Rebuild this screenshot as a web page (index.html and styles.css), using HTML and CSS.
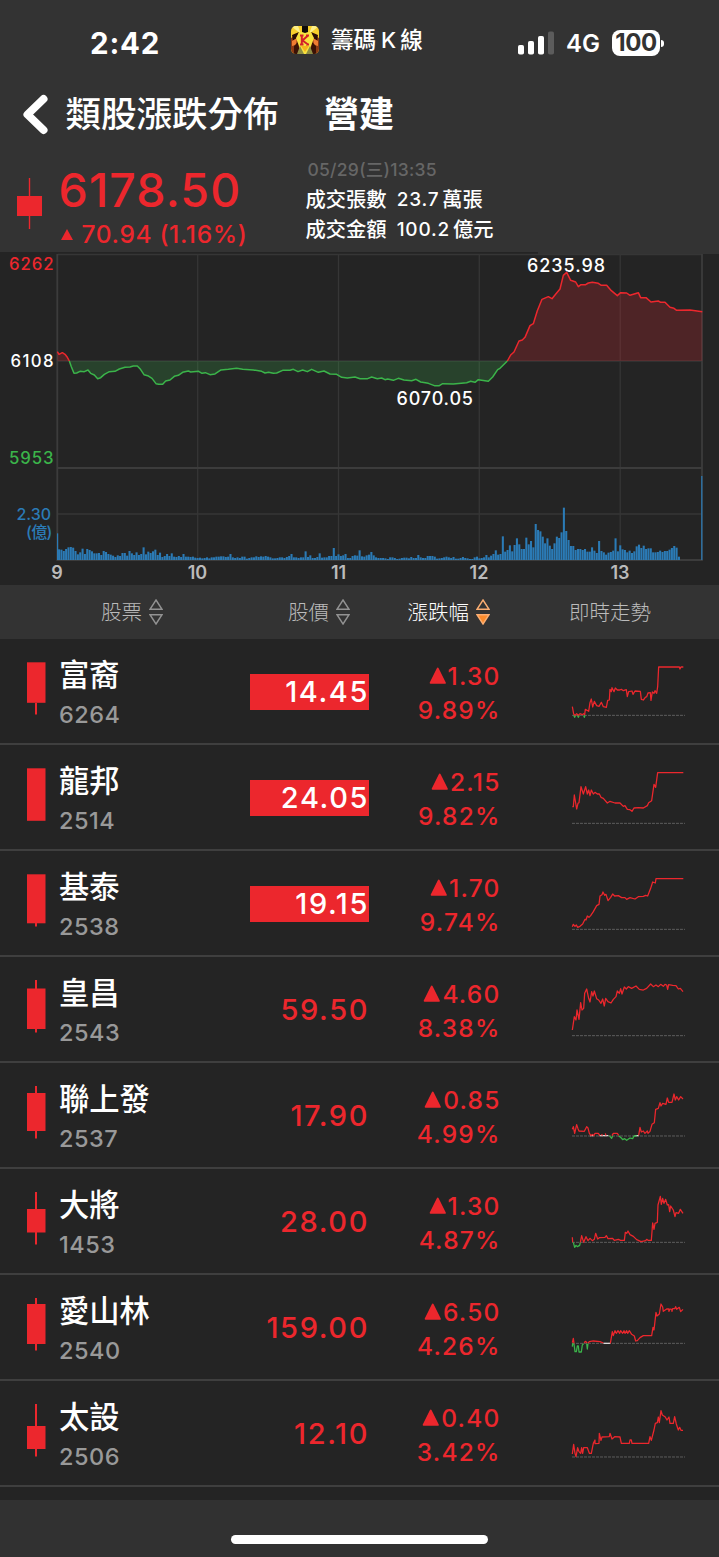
FILE: index.html
```html
<!DOCTYPE html>
<html lang="zh-Hant">
<head>
<meta charset="utf-8">
<title>類股漲跌分佈 營建</title>
<link rel="stylesheet" href="styles.css">
</head>
<body>
<header class="top">
  <div class="status">
    <span class="clock">2:42</span>
    <svg class="appicon" viewBox="0 0 28 28">
      <defs><clipPath id="ic"><rect width="28" height="28" rx="5"/></clipPath></defs>
      <g clip-path="url(#ic)">
        <rect width="28" height="28" fill="#f8cf2c"/>
        <path d="M0 0L10 8L7 0ZM28 0L18 8L21 0Z" fill="#fdf08a"/>
        <path d="M0 28V12L9 7L19 7L28 12V28Z" fill="#8c3a14"/>
        <path d="M1 9L8 6L6 12L2 15ZM27 9L20 6L22 12L26 15Z" fill="#2a0d06"/>
        <path d="M1 15L6 12L5 19L1 20ZM27 15L22 12L23 19L27 20Z" fill="#ef7d32"/>
        <path d="M3 20L7 16L9 28H3ZM25 20L21 16L19 28H25Z" fill="#3a1206"/>
        <path d="M8 6H20L23 12L20 20L17 28H10L8 20L5 12Z" fill="#f7e23f"/>
        <path d="M9 20L13 28H6ZM19 20L15 28H22Z" fill="#8d8d45"/>
        <path d="M10 20H18L14 26Z" fill="#f6b31d"/>
        <path d="M11 0H17V6L14 7L11 6Z" fill="#100c08"/>
        <path d="M10.800 9V19M17 9.500L11.500 14.500L17 18.500M9 9.500H12.500M9 18.500H12.500M15 18.500H18M15 9.500H18" stroke="#d3202a" stroke-width="2" fill="none"/>
      </g>
    </svg>
    <span class="appname">籌碼<i>K</i>線</span>
    <svg class="signal" viewBox="0 0 36 24">
      <g fill="#fff"><rect y="14" width="6" height="9.500" rx="1.800"/><rect x="10" y="10" width="6" height="13.500" rx="1.800"/><rect x="20" y="5" width="6" height="18.500" rx="1.800"/></g>
      <rect x="30" y="0.500" width="6" height="23" rx="1.800" fill="#5c5c5c"/>
    </svg>
    <span class="net">4G</span>
    <span class="battery">100</span>
    <span class="nub"></span>
  </div>
  <div class="nav">
    <svg class="back" viewBox="0 0 28 44"><path d="M21.500 6L5.500 21.500L21.500 37" fill="none" stroke="#fff" stroke-width="8" stroke-linecap="round" stroke-linejoin="round"/></svg>
    <h1 class="title">類股漲跌分佈</h1>
    <h2 class="sector">營建</h2>
  </div>
  <div class="quote">
    <svg class="qcandle" viewBox="0 0 26 52"><path d="M12.500 0V51" stroke="#ec272d" stroke-width="1.400"/><path d="M0 18H25V38H0Z" fill="#ec272d"/></svg>
    <div class="index">
      <div class="value">6178.50</div>
      <div class="delta"><svg class="dtri" viewBox="0 0 12 11"><path d="M6 0L12 11H0Z" fill="#ec272d"/></svg><span>70.94 (1.16%)</span></div>
    </div>
    <div class="meta">
      <div class="date">05/29(三)13:35</div>
      <div class="stat"><span class="k">成交張數</span><span class="n">23.7</span><span class="k">萬張</span></div>
      <div class="stat"><span class="k">成交金額</span><span class="n">100.2</span><span class="k">億元</span></div>
    </div>
  </div>
</header>

<svg class="chart" viewBox="0 252 719 333">
  <path d="M538 252H719V254H538Z" fill="#333"/>
  <g class="grid">
    <path d="M58 254.500H702M57 361H702M57 514H702"/>
    <path d="M197.700 254V560M338.500 254V560M479.300 254V560M620.200 254V560"/>
    <path class="strong" d="M57.300 254V560H702V254M57 468H702"/>
  </g>
  <g id="bars" class="bars"></g>
  <g transform="translate(0 240) scale(.33333)">
    <path class="area up" d="M172 363V335L177 343L187 338L195 343L202 352L208 363Z"/>
    <path class="area down" d="M208 363L214 380L222 400L230 399L240 394L253 395L264 390L272 400L283 405L293 416L302 413L313 403L328 395L345 394L358 387L375 382L390 381L400 378L412 378L420 386L432 404L443 407L456 415L468 431L476 433L488 433L497 423L510 420L523 409L535 406L548 397L565 393L572 396L596 394L606 400L616 398L630 404L645 402L663 390L685 388L710 385L728 388L760 390L785 394L795 399L806 397L820 400L830 399L848 391L870 391L880 388L894 395L908 390L922 395L935 388L955 397L972 393L990 402L1010 403L1025 412L1042 414L1065 411L1080 416L1103 416L1115 411L1132 416L1145 414L1155 419L1163 417L1180 421L1195 415L1212 420L1235 422L1248 418L1262 426L1285 430L1303 437L1318 437L1328 431L1360 432L1400 428L1412 424L1425 427L1435 419L1465 424L1478 411L1493 389L1500 385L1522 363Z"/>
    <path class="area up" d="M1522 363L1532 345L1542 336L1557 303L1567 300L1575 292L1590 257L1600 251L1612 212L1626 178L1645 170L1656 176L1668 161L1680 147L1690 106L1700 97L1712 121L1727 126L1735 140L1743 134L1757 134L1765 129L1777 127L1795 130L1804 136L1820 136L1834 152L1852 167L1862 158L1880 159L1890 166L1915 158L1922 173L1938 173L1953 186L1975 183L1982 187L1995 187L2010 202L2022 205L2030 211L2070 210L2107 215V363Z"/>
    <path class="line up" d="M172 335L177 343L187 338L195 343L202 352L208 363"/>
    <path class="line down" d="M208 363L214 380L222 400L230 399L240 394L253 395L264 390L272 400L283 405L293 416L302 413L313 403L328 395L345 394L358 387L375 382L390 381L400 378L412 378L420 386L432 404L443 407L456 415L468 431L476 433L488 433L497 423L510 420L523 409L535 406L548 397L565 393L572 396L596 394L606 400L616 398L630 404L645 402L663 390L685 388L710 385L728 388L760 390L785 394L795 399L806 397L820 400L830 399L848 391L870 391L880 388L894 395L908 390L922 395L935 388L955 397L972 393L990 402L1010 403L1025 412L1042 414L1065 411L1080 416L1103 416L1115 411L1132 416L1145 414L1155 419L1163 417L1180 421L1195 415L1212 420L1235 422L1248 418L1262 426L1285 430L1303 437L1318 437L1328 431L1360 432L1400 428L1412 424L1425 427L1435 419L1465 424L1478 411L1493 389L1500 385L1522 363"/>
    <path class="line up" d="M1522 363L1532 345L1542 336L1557 303L1567 300L1575 292L1590 257L1600 251L1612 212L1626 178L1645 170L1656 176L1668 161L1680 147L1690 106L1700 97L1712 121L1727 126L1735 140L1743 134L1757 134L1765 129L1777 127L1795 130L1804 136L1820 136L1834 152L1852 167L1862 158L1880 159L1890 166L1915 158L1922 173L1938 173L1953 186L1975 183L1982 187L1995 187L2010 202L2022 205L2030 211L2070 210L2107 215"/>
  </g>
  <g class="ylab">
    <text x="9" y="270" textLength="44.500" fill="#ec272d">6262</text>
    <text x="10.500" y="367" textLength="43" fill="#fff">6108</text>
    <text x="9" y="464" textLength="44.500" fill="#3bb44a">5953</text>
    <text class="vol" x="16.500" y="520" textLength="34.500">2.30</text>
    <text class="vol" x="26" y="538" textLength="26.500">(億)</text>
  </g>
  <g class="xlab">
    <text x="57" y="578.500">9</text><text x="197.500" y="578.500">10</text><text x="338.500" y="578.500">11</text><text x="479" y="578.500">12</text><text x="620" y="578.500">13</text>
  </g>
  <g class="peak">
    <text x="527" y="272" textLength="78">6235.98</text>
    <text x="396.500" y="405" textLength="76.500">6070.05</text>
  </g>
</svg>

<div class="thead">
  <div class="th c1">股票<svg class="sort" viewBox="0 0 14 26"><path d="M7 1L13 10.300H1ZM7 25L13 15.700H1Z"/></svg></div>
  <div class="th c2">股價<svg class="sort" viewBox="0 0 14 26"><path d="M7 1L13 10.300H1ZM7 25L13 15.700H1Z"/></svg></div>
  <div class="th c3 on">漲跌幅<svg class="sort" viewBox="0 0 14 26"><path d="M7 1L13 10.300H1Z"/><path class="fill" d="M7 25L13 15.700H1Z"/></svg></div>
  <div class="th c4">即時走勢</div>
</div>

<main class="rows">
  <div class="row">
    <svg class="candle" viewBox="0 0 60 104"><path d="M36 64V75.500"/><rect x="27" y="23.300" width="18.500" height="40.500"/></svg>
    <div class="stock"><div class="name">富裔</div><div class="code">6264</div></div>
    <div class="price limit">14.45</div>
    <div class="change"><div class="amt"><svg viewBox="0 0 16 16"><path d="M8 1.500L14.500 14.500H1.500Z"/></svg>1.30</div><div>9.89%</div></div>
    <svg class="spark" viewBox="570 -3 350 312"><path class="base" d="M576 226H915"/><path class="dn" d="M581 226L584 232L587 226M592 226L595 232L598 226M611 226L613 232L615 226"/><path d="M577 200L581 222L585 226L590 221L595 226L600 221L607 224L611 221L614 224L616 208L626 214L630 188L634 177L638 201L643 184L650 197L657 199L664 187L670 200L679 202L683 181L688 180L690 148L694 155L696 143L702 155L706 144L712 150L719 150L724 148L730 152L739 149L742 170L746 155L756 153L759 163L765 153L781 154L784 178L790 180L796 172L800 170L804 159L811 158L813 181L817 156L822 160L825 152L830 160L833 140L836 81L898 81L900 87L903 81L910 81"/></svg>
  </div>
  <div class="row">
    <svg class="candle" viewBox="0 0 60 104"><rect x="27" y="23.300" width="18.500" height="52.500"/></svg>
    <div class="stock"><div class="name">龍邦</div><div class="code">2514</div></div>
    <div class="price limit">24.05</div>
    <div class="change"><div class="amt"><svg viewBox="0 0 16 16"><path d="M8 1.500L14.500 14.500H1.500Z"/></svg>2.15</div><div>9.82%</div></div>
    <svg class="spark" viewBox="570 315 350 312"><path class="base" d="M576 550H915"/><path d="M577 500L580 500L583 465L590 507L594 490L597 488L603 440L610 462L617 440L622 462L626 450L630 467L634 450L640 462L645 457L652 462L658 462L663 472L670 475L682 489L690 484L705 489L720 489L730 499L735 497L742 508L750 509L756 514L762 504L775 503L790 504L802 497L806 488L815 482L822 433L827 442L833 398L910 398"/></svg>
  </div>
  <div class="row">
    <svg class="candle" viewBox="0 0 60 104"><path d="M36 72V75.500"/><rect x="27" y="23.300" width="18.500" height="49"/></svg>
    <div class="stock"><div class="name">基泰</div><div class="code">2538</div></div>
    <div class="price limit">19.15</div>
    <div class="change"><div class="amt"><svg viewBox="0 0 16 16"><path d="M8 1.500L14.500 14.500H1.500Z"/></svg>1.70</div><div>9.74%</div></div>
    <svg class="spark" viewBox="570 633 350 312"><path class="base" d="M576 868H915"/><path d="M577 860L580 853L585 859L589 855L593 862L600 859L608 852L615 838L618 840L622 828L627 832L632 827L640 815L650 797L657 793L660 768L666 764L669 756L674 766L678 763L684 782L692 772L698 762L704 768L715 767L725 773L735 773L740 778L750 773L765 777L775 770L790 769L797 766L803 768L812 745L818 726L826 729L828 716L910 716"/></svg>
  </div>
  <div class="row">
    <svg class="candle" viewBox="0 0 60 104"><path d="M36 23V75.500"/><rect x="27" y="31.500" width="18.500" height="40.500"/></svg>
    <div class="stock"><div class="name">皇昌</div><div class="code">2543</div></div>
    <div class="price">59.50</div>
    <div class="change"><div class="amt"><svg viewBox="0 0 16 16"><path d="M8 1.500L14.500 14.500H1.500Z"/></svg>4.60</div><div>8.38%</div></div>
    <svg class="spark" viewBox="570 951 350 312"><path class="base" d="M576 1187H915"/><path d="M577 1170L583 1130L588 1140L591 1110L597 1138L602 1088L606 1110L611 1105L614 1060L620 1047L626 1075L630 1086L635 1055L639 1068L643 1053L650 1076L656 1080L663 1090L668 1077L673 1098L677 1075L684 1085L693 1089L700 1078L708 1070L712 1053L718 1060L722 1046L726 1062L733 1041L739 1047L745 1040L755 1045L768 1038L778 1048L790 1050L800 1045L812 1032L820 1040L828 1035L835 1040L842 1033L850 1039L855 1033L860 1035L863 1048L866 1034L878 1036L888 1037L895 1047L901 1045L909 1055"/></svg>
  </div>
  <div class="row">
    <svg class="candle" viewBox="0 0 60 104"><path d="M36 23V75.500"/><rect x="27" y="30" width="18.500" height="38"/></svg>
    <div class="stock"><div class="name">聯上發</div><div class="code">2537</div></div>
    <div class="price">17.90</div>
    <div class="change"><div class="amt"><svg viewBox="0 0 16 16"><path d="M8 1.500L14.500 14.500H1.500Z"/></svg>0.85</div><div>4.99%</div></div>
    <svg class="spark" viewBox="570 -21 350 312"><path class="base" d="M576 198H915"/><path class="flat" d="M630 197H640M658 197H685M764 197H776"/><path class="dn" d="M688 197L695 205L698 197M716 197L724 204L728 209L734 206L740 211L750 204L758 206L762 198L770 198"/><path d="M577 178L580 170L584 190L590 164L594 176L597 183L613 184L620 170L624 174L628 190L633 197L637 193L641 197L645 190L655 190L660 197M665 192L667 197M676 190L678 197M696 197L700 190L712 190L716 196M776 196L780 172L784 186L790 183L795 190L802 183L804 190L810 184L816 163L823 158L827 118L835 115L840 98L843 108L848 100L858 103L862 84L866 97L876 97L882 72L886 90L890 80L896 90L902 80L909 87"/></svg>
  </div>
  <div class="row">
    <svg class="candle" viewBox="0 0 60 104"><path d="M36 23V75.500"/><rect x="27" y="40" width="18.500" height="23.500"/></svg>
    <div class="stock"><div class="name">大將</div><div class="code">1453</div></div>
    <div class="price">28.00</div>
    <div class="change"><div class="amt"><svg viewBox="0 0 16 16"><path d="M8 1.500L14.500 14.500H1.500Z"/></svg>1.30</div><div>4.87%</div></div>
    <svg class="spark" viewBox="570 297 350 312"><path class="base" d="M576 517H915"/><path class="dn" d="M580 517L584 532L588 526L592 530L599 526L601 517"/><path d="M577 502L578 517M601 517L605 497L611 517L618 500L624 512L630 505L637 512L643 508L647 490L653 507L658 503L675 502L679 497L684 506L698 505L703 511L715 508L722 511L733 511L736 487L740 490L744 483L750 494L760 499L770 509L783 515L797 512L800 508L804 511L814 511L818 459L822 478L825 460L832 457L834 405L841 379L844 403L848 385L852 400L857 388L862 405L866 404L869 425L872 408L880 420L885 440L888 428L896 430L901 418L909 430"/></svg>
  </div>
  <div class="row">
    <svg class="candle" viewBox="0 0 60 104"><path d="M36 23V75.500"/><rect x="27" y="29" width="18.500" height="40"/></svg>
    <div class="stock"><div class="name">愛山林</div><div class="code">2540</div></div>
    <div class="price">159.00</div>
    <div class="change"><div class="amt"><svg viewBox="0 0 16 16"><path d="M8 1.500L14.500 14.500H1.500Z"/></svg>6.50</div><div>4.26%</div></div>
    <svg class="spark" viewBox="570 615 350 312"><path class="base" d="M576 820H915"/><path class="flat" d="M670 820H691"/><path class="dn" d="M577 830L578 821L582 822L585 845L589 845L592 828L595 828L597 846L604 846L607 825L611 821M620 821L622 837L624 821"/><path d="M577 818L580 805L582 820M612 818L617 814L621 819M624 819L628 815L640 813L660 815L670 819M691 820L697 785L700 797L705 782L709 790L714 782L719 790L722 782L728 790L732 782L735 790L740 782L743 790L748 782L755 793L763 798L767 813L772 812L780 803L790 797L815 797L819 772L822 780L828 727L831 738L838 732L843 702L848 711L850 724L860 717L866 717L867 724L870 717L875 718L876 724L878 716L884 716L887 710L890 718L898 712L902 725L909 718"/></svg>
  </div>
  <div class="row">
    <svg class="candle" viewBox="0 0 60 104"><path d="M36 23V75.500"/><rect x="27" y="45" width="18.500" height="23"/></svg>
    <div class="stock"><div class="name">太設</div><div class="code">2506</div></div>
    <div class="price">12.10</div>
    <div class="change"><div class="amt"><svg viewBox="0 0 16 16"><path d="M8 1.500L14.500 14.500H1.500Z"/></svg>0.40</div><div>3.42%</div></div>
    <svg class="spark" viewBox="570 933 350 312"><path class="base" d="M576 1161H915"/><path d="M577 1152L581 1123L585 1150L588 1160L593 1133L597 1145L602 1150L605 1133L608 1150L611 1133L622 1133L628 1150L634 1150L640 1120L645 1110L645 1121L657 1120L658 1090L663 1111L666 1101L688 1100L690 1090L696 1107L704 1100L720 1101L724 1120L748 1120L750 1110L754 1110L756 1120L806 1120L810 1100L814 1111L822 1080L826 1060L832 1058L835 1041L838 1058L843 1022L847 1035L855 1040L861 1050L867 1041L870 1060L880 1060L884 1040L889 1062L895 1080L899 1072L903 1081L909 1081"/></svg>
  </div>
</main>
<footer class="foot"><div class="home"></div></footer>
<script src="chart.js"></script>
</body>
</html>
```

FILE: styles.css
```css
* { box-sizing: border-box; }
body {
  margin: 0;
  width: 719px;
  height: 1557px;
  overflow: hidden;
  background: #242424;
  color: #fff;
  font-family: Inter, "Noto Sans CJK TC", sans-serif;
  display: flex;
  flex-direction: column;
}
svg { display: block; flex: none; }
.top { height: 252px; background: #333; flex: none; }

.status { height: 80px; padding: 6px 0 0 90px; display: flex; align-items: center; white-space: nowrap; }
.clock { width: 200px; font-size: 29.5px; font-weight: 700; line-height: 74px; letter-spacing: .8px; }
.appicon { width: 28px; height: 28px; margin: -7px 12px 0 1px; }
.appname { width: 187px; font: 500 22.5px/30px "Noto Sans CJK TC", sans-serif; margin-top: -10px; }
.appname i { font: 500 22px Inter, sans-serif; margin: 0 4px 0 5px; }
.signal { width: 36px; height: 24px; margin-top: -1px; }
.net { width: 58px; padding-left: 12px; font-size: 24px; font-weight: 600; line-height: 30px; margin-top: 2px; }
.battery { width: 48px; height: 26px; margin-top: -1px; border-radius: 8px; background: #fff; color: #333; font-size: 24px; font-weight: 700; line-height: 26px; text-align: center; letter-spacing: -.4px; }
.nub { width: 3px; height: 7px; margin-left: 1px; border-radius: 0 3px 3px 0; background: #fff; }

.nav { height: 70px; padding-left: 22px; display: flex; align-items: center; }
.back { width: 28px; height: 44px; }
.title, .sector { margin: -6px 0 0; font: 500 35.5px/50px "Noto Sans CJK TC", sans-serif; white-space: nowrap; }
.title { width: 258.5px; margin-left: 15.5px; }
.sector { font-size: 35px; font-weight: 600; }

.quote { height: 102px; display: flex; }
.qcandle { width: 26px; height: 52px; margin: 28px 15.5px 0 17px; }
.index { width: 247px; padding-top: 15px; color: #ec272d; white-space: nowrap; }
.value { font-size: 46.5px; font-weight: 500; line-height: 51px; letter-spacing: 1.1px; }
.delta { display: flex; align-items: center; gap: 9px; font-size: 24.5px; font-weight: 500; line-height: 37px; padding-left: 2px; letter-spacing: .65px; }
.dtri { width: 12px; height: 11px; }
.meta { padding-top: 6px; white-space: nowrap; }
.date { font-size: 17.5px; line-height: 28px; color: #666; font-weight: 500; padding-left: 2px; letter-spacing: .25px; }
.stat { display: flex; line-height: 29px; font-size: 19px; font-weight: 500; }
.stat .k { font-family: "Noto Sans CJK TC", sans-serif; font-size: 20.3px; }
.stat .n { margin: 1px 3px 0 10px; letter-spacing: .8px; }

.chart { width: 719px; height: 333px; }
.grid { fill: none; stroke: #363636; stroke-width: 1.3; }
.grid .strong { stroke: #3c3c3c; stroke-width: 1.8; }
.bars { fill: #2b7bb6; }
.line { fill: none; stroke-width: 4.5; stroke-linejoin: round; }
.line.up { stroke: #ec272d; }
.line.down { stroke: #3bb44a; }
.area.up { fill: rgba(236, 39, 45, .21); }
.area.down { fill: rgba(59, 180, 74, .21); }
.ylab { font-size: 16.8px; font-weight: 500; }
.ylab .vol { fill: #2b7bb6; font-size: 16px; }
.xlab { font-size: 18px; font-weight: 600; fill: #bbb; text-anchor: middle; }
.peak { font-size: 18px; font-weight: 500; fill: #fff; }

.thead { height: 54px; background: #333; display: grid; grid-template-columns: 101px 187px 119.5px 161.5px 150px; font: 300 20.5px/50px "Noto Sans CJK TC", sans-serif; color: #bbb; flex: none; }
.th { display: flex; align-items: center; gap: 6.5px; white-space: nowrap; height: 52px; }
.c1 { grid-column: 2; }
.c2 { grid-column: 3; }
.c3 { grid-column: 4; }
.c4 { grid-column: 5; }
.on { color: #fff; }
.sort { width: 14px; height: 26px; margin-top: 2px; fill: none; stroke: #929292; stroke-width: 1.4; }
.on .sort { stroke: #fbae72; }
.on .fill { fill: #fb8b2c; }

.rows { flex: none; }
.row { height: 106px; border-bottom: 2px solid #3f3f3f; display: grid; grid-template-columns: 59px 191px 119px 129px 1fr; }
.candle { width: 60px; height: 104px; fill: #ec272d; }
.candle path { stroke: #ec272d; stroke-width: 2; }
.stock { padding-top: 13px; }
.name { font: 500 30.3px/42px "Noto Sans CJK TC", sans-serif; white-space: nowrap; }
.code { font-size: 23.5px; line-height: 42px; color: #999; font-weight: 500; letter-spacing: .5px; }
.price { margin-top: 35px; height: 36px; text-align: right; font-size: 29px; line-height: 36px; font-weight: 500; letter-spacing: 1.6px; color: #ec272d; }
.price.limit { background: #ec272d; color: #fff; }
.change { padding-top: 20px; margin-right: -2.5px; text-align: right; font-size: 24.5px; line-height: 34px; font-weight: 500; letter-spacing: 1.2px; color: #ec272d; }
.amt { display: flex; justify-content: flex-end; align-items: center; gap: 1.5px; }
.amt svg { width: 17.5px; height: 17.5px; fill: #ec272d; stroke: #ec272d; stroke-width: 1.8; stroke-linejoin: round; }
.spark { width: 116.67px; height: 104px; margin-left: 72px; fill: none; stroke: #ec272d; stroke-width: 3.8; stroke-linejoin: round; }
.spark .base { stroke: #666; stroke-width: 2.6; stroke-dasharray: 9 3; }
.spark .dn { stroke: #3bb44a; }
.spark .flat { stroke: #ddd; }

.foot { margin-top: 13px; flex: 1; background: #313131; padding-top: 35px; }
.home { width: 257px; height: 8.5px; margin-left: 231px; border-radius: 5px; background: #fff; }
```

FILE: chart.js
```js
// Per-minute turnover from 09:00, in thirds of a pixel.
const volumes = [
  80,32,31,27,33,38,39,37,27,17,23,34,18,33,30,26,20,20,21,15,27,24,18,16,13,9,14,12,21,21,
  13,27,20,15,23,15,18,38,17,25,21,26,31,15,22,9,12,18,12,20,10,9,12,9,18,10,10,9,10,7,
  6,7,5,6,8,5,8,8,10,10,11,11,9,10,18,8,6,8,6,10,10,4,6,8,8,11,9,11,10,12,
  10,8,5,5,6,8,8,6,9,12,18,8,8,6,8,8,26,9,14,6,6,9,20,7,8,8,12,12,36,12,
  17,12,14,18,6,6,12,14,13,29,11,10,14,16,24,14,8,6,6,6,5,3,8,8,6,3,4,6,7,7,
  5,9,6,6,15,8,6,6,12,12,12,10,4,5,6,8,10,8,6,9,4,4,6,9,6,5,3,3,8,10,
  5,6,8,15,8,13,18,29,16,18,71,25,30,44,26,45,65,47,33,33,67,47,57,38,108,90,86,70,50,65,
  43,33,50,70,66,83,157,87,60,42,42,30,33,33,30,33,25,25,38,28,21,57,27,23,16,22,24,28,65,26,
  44,32,30,23,28,21,26,41,46,36,43,33,35,35,23,23,24,28,24,27,27,31,36,42,37,10
];
const NS = "http://www.w3.org/2000/svg";
const bars = document.getElementById("bars");
function bar(x, w, h) {
  const r = document.createElementNS(NS, "rect");
  r.setAttribute("x", x);
  r.setAttribute("y", 560 - h);
  r.setAttribute("width", w);
  r.setAttribute("height", h);
  bars.appendChild(r);
}
volumes.forEach((v, i) => {
  if (i === 0) bar(57, 1.2, v / 3);
  else bar(55.7 + i * 2.348, 2.05, v / 3);
});
bar(701.2, 1.2, 84);
```
